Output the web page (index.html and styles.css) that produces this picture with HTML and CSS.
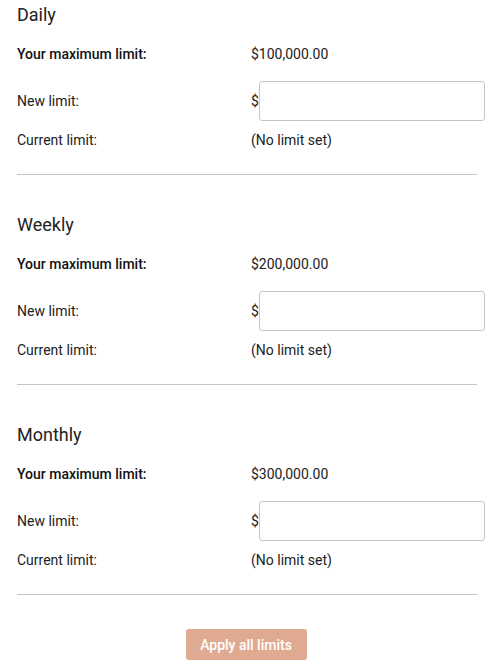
FILE: index.html
```html
<!DOCTYPE html>
<html>
<head>
<meta charset="utf-8">
<link rel="stylesheet" href="styles.css">
</head>
<body>
<div class="page">
  <section class="period">
    <h2 class="title">Daily</h2>
    <div class="row row-max"><span class="label strong">Your maximum limit:</span><span class="value">$100,000.00</span></div>
    <div class="row row-new"><span class="label">New limit:</span><span class="value"><span class="cur">$</span><input class="field" type="text"></span></div>
    <div class="row row-cur"><span class="label">Current limit:</span><span class="value">(No limit set)</span></div>
    <hr class="sep">
  </section>
  <section class="period">
    <h2 class="title">Weekly</h2>
    <div class="row row-max"><span class="label strong">Your maximum limit:</span><span class="value">$200,000.00</span></div>
    <div class="row row-new"><span class="label">New limit:</span><span class="value"><span class="cur">$</span><input class="field" type="text"></span></div>
    <div class="row row-cur"><span class="label">Current limit:</span><span class="value">(No limit set)</span></div>
    <hr class="sep">
  </section>
  <section class="period">
    <h2 class="title">Monthly</h2>
    <div class="row row-max"><span class="label strong">Your maximum limit:</span><span class="value">$300,000.00</span></div>
    <div class="row row-new"><span class="label">New limit:</span><span class="value"><span class="cur">$</span><input class="field" type="text"></span></div>
    <div class="row row-cur"><span class="label">Current limit:</span><span class="value">(No limit set)</span></div>
    <hr class="sep">
  </section>
  <div class="actions"><button class="apply" type="button">Apply all limits</button></div>
</div>
</body>
</html>
```
FILE: styles.css
```css
html, body {
  margin: 0;
  padding: 0;
  background: #fff;
}
body {
  font-family: Roboto, "Liberation Sans", Arial, sans-serif;
  color: #222;
  font-size: 14px;
}
.page {
  padding: 4px 0 0 17px;
}
.period {
  margin-bottom: 39px;
}
.period:last-of-type {
  margin-bottom: 34px;
}
.title {
  margin: 0;
  font-size: 18px;
  line-height: 22px;
  font-weight: 400;
  color: #222;
}
.row {
  display: flex;
  align-items: center;
  line-height: 20px;
}
.row-max {
  margin-top: 18px;
}
.row-new {
  margin-top: 17px;
}
.row-cur {
  margin-top: 9px;
}
.label {
  width: 234px;
  flex: none;
}
.strong {
  font-weight: 500;
  color: #111;
}
.value {
  display: flex;
  align-items: center;
}
.cur {
  width: 8px;
}
.field {
  box-sizing: border-box;
  width: 226px;
  height: 40px;
  margin: 0;
  border: 1px solid #c4c4c4;
  border-radius: 3px;
  background: #fff;
  padding: 0 8px;
  font: inherit;
}
.sep {
  width: 460px;
  margin: 24px 0 0 0;
  border: 0;
  border-top: 1px solid #c6c6c6;
  height: 0;
}
.actions {
  display: flex;
  justify-content: center;
  margin-left: -17px;
}
.apply {
  width: 121px;
  height: 31px;
  border: 0;
  border-radius: 3px;
  background: #dfaa91;
  color: #fff;
  font-family: Roboto, "Liberation Sans", Arial, sans-serif;
  font-size: 14px;
  font-weight: 500;
  padding: 0;
}
```
